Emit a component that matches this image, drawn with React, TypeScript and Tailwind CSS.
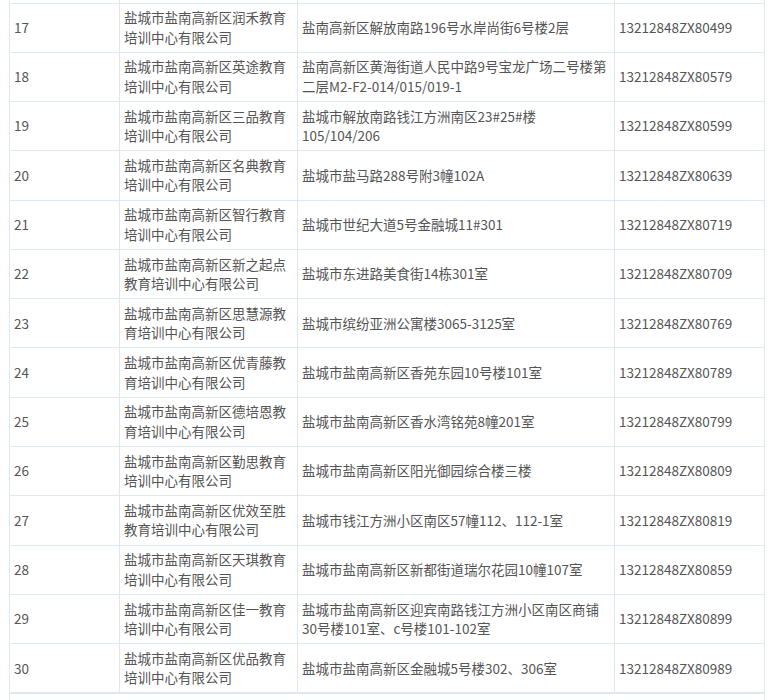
const ROWS: [number, string[], string[], string][] = [
  [17, ["盐城市盐南高新区润禾教育", "培训中心有限公司"], ["盐南高新区解放南路196号水岸尚街6号楼2层"], "13212848ZX80499"],
  [18, ["盐城市盐南高新区英途教育", "培训中心有限公司"], ["盐南高新区黄海街道人民中路9号宝龙广场二号楼第", "二层M2-F2-014/015/019-1"], "13212848ZX80579"],
  [19, ["盐城市盐南高新区三品教育", "培训中心有限公司"], ["盐城市解放南路钱江方洲南区23#25#楼", "105/104/206"], "13212848ZX80599"],
  [20, ["盐城市盐南高新区名典教育", "培训中心有限公司"], ["盐城市盐马路288号附3幢102A"], "13212848ZX80639"],
  [21, ["盐城市盐南高新区智行教育", "培训中心有限公司"], ["盐城市世纪大道5号金融城11#301"], "13212848ZX80719"],
  [22, ["盐城市盐南高新区新之起点", "教育培训中心有限公司"], ["盐城市东进路美食街14栋301室"], "13212848ZX80709"],
  [23, ["盐城市盐南高新区思慧源教", "育培训中心有限公司"], ["盐城市缤纷亚洲公寓楼3065-3125室"], "13212848ZX80769"],
  [24, ["盐城市盐南高新区优青藤教", "育培训中心有限公司"], ["盐城市盐南高新区香苑东园10号楼101室"], "13212848ZX80789"],
  [25, ["盐城市盐南高新区德培恩教", "育培训中心有限公司"], ["盐城市盐南高新区香水湾铭苑8幢201室"], "13212848ZX80799"],
  [26, ["盐城市盐南高新区勤思教育", "培训中心有限公司"], ["盐城市盐南高新区阳光御园综合楼三楼"], "13212848ZX80809"],
  [27, ["盐城市盐南高新区优效至胜", "教育培训中心有限公司"], ["盐城市钱江方洲小区南区57幢112、112-1室"], "13212848ZX80819"],
  [28, ["盐城市盐南高新区天琪教育", "培训中心有限公司"], ["盐城市盐南高新区新都街道瑞尔花园10幢107室"], "13212848ZX80859"],
  [29, ["盐城市盐南高新区佳一教育", "培训中心有限公司"], ["盐城市盐南高新区迎宾南路钱江方洲小区南区商铺", "30号楼101室、c号楼101-102室"], "13212848ZX80899"],
  [30, ["盐城市盐南高新区优品教育", "培训中心有限公司"], ["盐城市盐南高新区金融城5号楼302、306室"], "13212848ZX80989"],
];

function Lines({ lines }: { lines: string[] }) {
  return (
    <>
      {lines.map((l, i) => (
        <div key={i} className="whitespace-nowrap">
          {l}
        </div>
      ))}
    </>
  );
}

const cell = "border border-[#dfe7f0] px-[4px] py-[4.65px] align-middle";

export default function App() {
  return (
    <main
      className="min-h-screen bg-white text-[#555] text-[13.5px] leading-[19.5px]"
      style={{ fontFamily: '"Noto Sans CJK SC", "Noto Sans", sans-serif' }}
    >
      <table className="ml-[9px] w-[755px] table-fixed border-collapse">
        <colgroup>
          <col className="w-[110px]" />
          <col className="w-[178px]" />
          <col className="w-[317px]" />
          <col className="w-[150px]" />
        </colgroup>
        <tbody>
          {/* tail of the previous row */}
          <tr className="h-[3px]">
            <td className="border border-t-0 border-[#dfe7f0] p-0" />
            <td className="border border-t-0 border-[#dfe7f0] p-0" />
            <td className="border border-t-0 border-[#dfe7f0] p-0" />
            <td className="border border-t-0 border-[#dfe7f0] p-0" />
          </tr>
          {ROWS.map(([n, name, addr, code]) => (
            <tr key={n}>
              <td className={cell}>{n}</td>
              <td className={cell}>
                <Lines lines={name} />
              </td>
              <td className={cell}>
                <Lines lines={addr} />
              </td>
              <td className={cell}>{code}</td>
            </tr>
          ))}
          <tr>
            <td colSpan={4} className="border-x border-t-2 border-[#dfe7f0] h-[40px]" />
          </tr>
        </tbody>
      </table>
    </main>
  );
}
